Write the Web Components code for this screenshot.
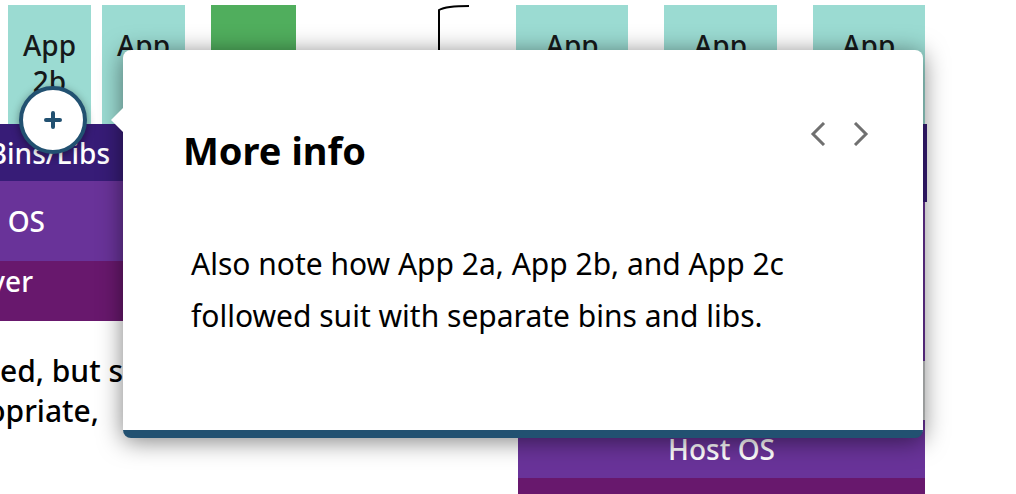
<!DOCTYPE html>
<html lang="en">
<head>
<meta charset="utf-8">
<meta name="viewport" content="width=device-width, initial-scale=1">
<title>More info</title>
<style>
  body { margin: 0; background: #fff; color: #000; font-family: "Noto Sans", "Open Sans", sans-serif; }
</style>
</head>
<body>
<lesson-stage></lesson-stage>
<script>
const define = (name, html, setup) => customElements.define(name, class extends HTMLElement {
  constructor() {
    super();
    const t = document.createElement('template');
    t.innerHTML = html;
    this.attachShadow({ mode: 'open' }).append(t.content.cloneNode(true));
    if (setup) setup(this);
  }
});

define('app-box', `
<style>
  :host { display: block; flex: 1; min-width: 0; box-sizing: border-box; height: 119px; padding-top: 22px;
    background: #9bdbd2; color: #16191a; font-size: 28px; line-height: 36px; font-weight: 500; text-align: center; }
  ::slotted(span) { display: block; }
</style><slot></slot>`);

define('stack-layer', `
<style>
  :host { display: flex; align-items: center; justify-content: center; box-sizing: border-box; height: 80px;
    background: #693399; color: #fff; font-size: 28px; line-height: 40px; font-weight: 500; white-space: nowrap; }
  :host([kind="libs"]) { height: 57px; background: #371c77; }
  :host([kind="server"]) { height: 60px; background: #68186d; align-items: flex-start; }
  :host([kind="host"]) { height: 58px; }
  :host([kind="gap"]) { height: 59px; background: #c9cccc; }
  :host([tall]) { height: 78px; }
  :host([double]) { height: 159px; }
</style><slot></slot>`);

define('hot-spot', `
<style>
  :host { display: block; }
  button { display: grid; place-items: center; width: 68px; height: 68px; padding: 0; box-sizing: border-box;
    border: 4px solid #225171; border-radius: 50%; background: #fff; box-shadow: 0 2px 8px rgba(0,0,0,.4); cursor: pointer; }
</style>
<button type="button" aria-label="Show more info">
  <svg width="18" height="18" viewBox="0 0 18 18" fill="none" stroke="#225171" stroke-width="4" stroke-linecap="round"><path d="M9 2V16M2 9H16"/></svg>
</button>`);

define('info-popover', `
<style>
  :host { display: block; box-sizing: border-box; padding: 76px 54px 88px 60px; background: #fff;
    border-bottom: 8px solid #225171; border-radius: 8px; box-shadow: 0 3px 24px rgba(0,0,0,.5); }
  .arrow { position: absolute; left: -12px; top: 58px; width: 12px; height: 24px; background: #fff;
    clip-path: polygon(0 50%, 100% 0, 100% 100%); }
  header { display: flex; justify-content: space-between; align-items: flex-start; margin-bottom: 64px; }
  ::slotted(h2) { margin: 0; font-size: 38px; line-height: 48px; font-weight: 700; }
  ::slotted(p) { margin: 0 0 0 8px; font-size: 30px; line-height: 52px; }
  nav { display: flex; gap: 27px; margin-top: -4px; }
  button { display: block; width: 16px; height: 24px; padding: 0; border: 0; background: none; cursor: pointer; }
  svg { display: block; }
</style>
<span class="arrow"></span>
<header>
  <slot name="title"></slot>
  <nav aria-label="Hotspots">
    <button type="button" aria-label="Previous"><svg width="16" height="24" viewBox="0 0 16 24" fill="none" stroke="#707070" stroke-width="3"><path d="M14 1L3 12L14 23"/></svg></button>
    <button type="button" aria-label="Next"><svg width="16" height="24" viewBox="0 0 16 24" fill="none" stroke="#707070" stroke-width="3"><path d="M2 1L13 12L2 23"/></svg></button>
  </nav>
</header>
<slot></slot>`);

define('lesson-stage', `
<style>
  :host { display: block; position: relative; height: 100vh; overflow: hidden; }
  .diagram { display: grid; grid-template-columns: 185px 111px 199px 1fr; height: 100%; box-sizing: border-box; padding: 5px 91px 0 0; }
  .apps { display: flex; gap: 11px; padding-left: 8px; }
  .left stack-layer { justify-content: flex-end; padding-right: 75px; }
  .left stack-layer.os { padding-right: 140px; }
  .left stack-layer.server { padding-right: 152px; }
  .copy { display: flex; flex-direction: column; align-items: flex-end; margin-top: 30px;
    font-size: 30px; line-height: 40px; font-weight: 500; white-space: nowrap; }
  .copy p { margin: 0 62px 0 0; }
  .copy p + p { margin-right: 86px; }
  .green { height: 119px; margin-left: 26px; background: #50ae5d; }
  .bracket { display: block; margin-left: 142px; }
  .right { display: flex; flex-direction: column; margin-left: 21px; }
  .right > * { flex: none; }
  .right stack-layer { margin-left: 2px; }
  .right .apps { gap: 36px; padding-left: 0; }
  .right .wide { margin-right: -2px; }
  .right .base { flex: 1 1 0; min-height: 0; }
  info-popover { position: absolute; left: 123px; right: 93px; top: 50px; }
  hot-spot { position: absolute; left: 19px; top: 86px; }
</style>
<div class="diagram">
  <section class="left">
    <div class="apps"><app-box><span>App</span><span>2b</span></app-box><app-box><span>App</span></app-box></div>
    <stack-layer kind="libs">Bins/Libs</stack-layer>
    <stack-layer class="os">OS</stack-layer>
    <stack-layer class="server" kind="server">ver</stack-layer>
    <div class="copy"><p>ed, but s</p><p>opriate,</p></div>
  </section>
  <div class="green"></div>
  <svg class="bracket" width="31" height="119" viewBox="0 0 31 119" fill="none" stroke="#000" stroke-width="2"><path d="M1 119V5Q8 1 31 1"/></svg>
  <section class="right">
    <div class="apps"><app-box><span>App</span></app-box><app-box><span>App</span></app-box><app-box><span>App</span></app-box></div>
    <stack-layer class="wide" kind="libs" tall></stack-layer>
    <stack-layer double></stack-layer>
    <stack-layer kind="gap"></stack-layer>
    <stack-layer kind="host">Host OS</stack-layer>
    <stack-layer kind="server" class="base"></stack-layer>
  </section>
</div>
<info-popover>
  <h2 slot="title">More info</h2>
  <p>Also note how App 2a, App 2b, and App 2c followed suit with separate bins and libs.</p>
</info-popover>
<hot-spot></hot-spot>`);
</script>
</body>
</html>
